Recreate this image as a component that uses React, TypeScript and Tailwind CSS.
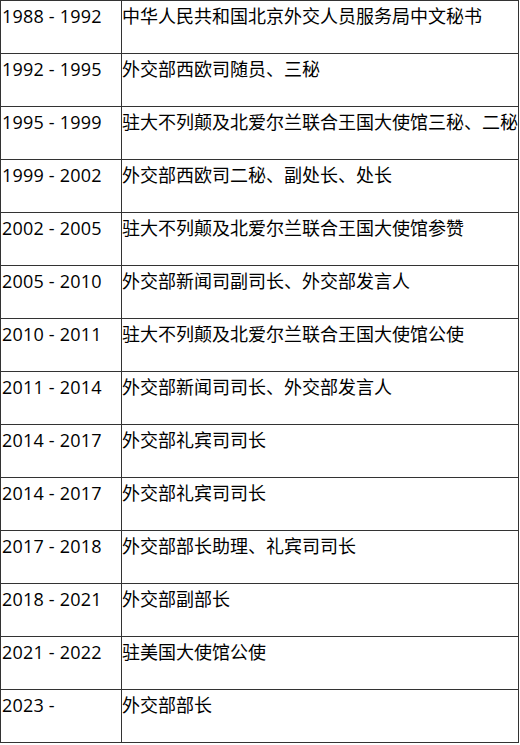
import React from "react";

const rows: [string, string][] = [
  ["1988 - 1992", "中华人民共和国北京外交人员服务局中文秘书"],
  ["1992 - 1995", "外交部西欧司随员、三秘"],
  ["1995 - 1999", "驻大不列颠及北爱尔兰联合王国大使馆三秘、二秘"],
  ["1999 - 2002", "外交部西欧司二秘、副处长、处长"],
  ["2002 - 2005", "驻大不列颠及北爱尔兰联合王国大使馆参赞"],
  ["2005 - 2010", "外交部新闻司副司长、外交部发言人"],
  ["2010 - 2011", "驻大不列颠及北爱尔兰联合王国大使馆公使"],
  ["2011 - 2014", "外交部新闻司司长、外交部发言人"],
  ["2014 - 2017", "外交部礼宾司司长"],
  ["2014 - 2017", "外交部礼宾司司长"],
  ["2017 - 2018", "外交部部长助理、礼宾司司长"],
  ["2018 - 2021", "外交部副部长"],
  ["2021 - 2022", "驻美国大使馆公使"],
  ["2023 - ", "外交部部长"],
];

export default function App() {
  return (
    <div className="bg-white w-[520px] h-[745px] overflow-hidden">
      <div
        className="w-[519px] border-l border-t border-[#333333] text-black text-[18px]"
        style={{ fontFamily: '"Noto Sans", "Noto Sans CJK SC", sans-serif' }}
      >
        {rows.map(([years, title], i) => (
          <div key={i} className="flex h-[53px] border-b border-[#333333]">
            <div
              className="w-[121px] shrink-0 border-r border-[#333333] pl-[1px] pt-[2px] leading-[26px] whitespace-nowrap tracking-[0.2px]"
              style={{ fontFamily: '"Open Sans", "Noto Sans", sans-serif' }}
            >
              {years}
            </div>
            <div className="w-[397px] shrink-0 border-r border-[#333333] pl-[0px] pt-[2px] leading-[26px] whitespace-nowrap overflow-hidden">
              {title}
            </div>
          </div>
        ))}
      </div>
    </div>
  );
}
